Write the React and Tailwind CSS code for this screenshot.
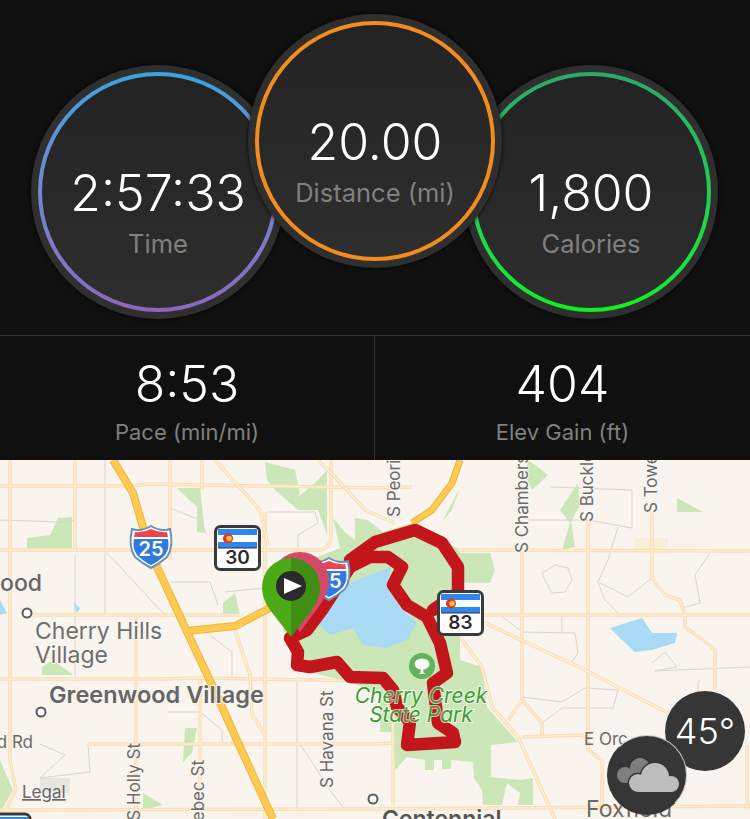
import React from 'react';

// page background of the top half is nearly black, map sits below it
const MAJOR_ROADS = [
  'M0,26 L130,26 L150,24 L375,28 L412,27',
  'M0,90 L320,90 Q331,88 331,75 L331,0',
  'M27,155 L240,155',
  'M0,219 L160,219 L200,218 L375,221 L393,222',
  'M88,284 L375,284 L393,283',
  'M0,350 L375,349 L750,346',
  'M10,0 L10,150 L10,300 L16,330 L6,350',
  'M75,0 L75,90',
  'M170,0 L170,100',
  'M202,0 L202,30',
  'M136,155 L136,359',
  'M200,220 L200,359',
  'M265,52 L265,359',
  'M393,222 L393,345',
  'M458,90 L750,91',
  'M483,155 L750,155',
  'M522,90 L522,240 L542,263 L542,277',
  'M522,240 L508,260',
  'M588,62 L588,290 L602,300 L602,347',
  'M652,50 L652,118 L665,135 L680,140 L685,155 L685,167 L700,178 L715,190 L715,230',
  'M522,277 L582,275 L588,280',
  'M747,285 L747,350',
];
const DIAGONAL_ROADS = [
  'M215,0 L260,50 L268,85',
  'M318,0 L335,17 L365,50 L395,63',
  'M485,163 L585,210 L668,253',
  'M460,177 L482,207 L492,247 L518,277 L555,359',
  'M235,170 L250,215 L252,255 L265,275',
];
const MINOR_ROADS = [
  'M105,0 L105,155',
  'M170,48 L200,60 L207,75',
  'M107,93 L165,155',
  'M75,95 L75,217',
  'M0,60 L60,62 L75,60',
  'M170,122 L210,122 L218,145',
  'M225,132 L265,128',
  'M267,52 L315,52 L318,63 L298,75 L298,87',
  'M210,175 L232,192 L232,218',
  'M136,220 L136,284',
  'M168,252 L200,252 L222,270 L222,284',
  'M297,219 L297,350',
  'M40,284 L65,295 L40,318 L90,312 L88,284',
  'M300,284 L330,330 L345,350',
  'M542,113 L555,105 L568,108 L572,120 L565,132 L552,133 L545,120 Z',
  'M550,27 L632,30 L632,68 L588,60 L528,60',
  'M618,67 L608,100 L598,122 L605,140 L620,155',
  'M652,118 L628,137 L600,123',
  'M710,93 L695,115 L700,143 L682,148',
  'M652,203 L665,192 L677,207 L655,211 L750,207',
  'M503,157 L522,172 L575,173 L578,193 L572,202',
  'M562,157 L562,173',
  'M522,237 L562,242 L585,228 L618,230 L613,248 L562,248 L542,263',
  'M700,220 L698,222 L698,240',
];
const PARKS = [
  '177,28 200,28 205,73 197,72 197,47',
  '27,78 50,75 58,58 72,57 72,88 27,88',
  '223,143 235,133 240,155 223,155',
  '42,207 53,200 73,215 42,215',
  '185,268 197,268 192,293 183,302',
  '143,333 163,345 143,350',
  '0,300 13,330 0,353',
  '265,2 295,10 300,33 298,37 315,23 327,10 327,75 318,50 298,50 290,43 275,30 267,20',
  '333,58 345,72 355,80 355,58 368,60 383,72 412,63 460,90 460,200 482,207 487,247 518,282 491,285 491,317 520,320 533,318 533,345 518,345 520,333 507,323 502,345 483,345 482,330 474,318 473,302 451,300 451,309 442,309 442,300 434,300 434,310 425,310 425,300 407,297 395,310 393,272 380,272 380,235 350,222 313,213 283,170 310,100 340,88',
  '458,93 490,93 495,110 490,123 460,123',
  '528,0 548,15 532,30 525,15',
  '460,28 442,62 452,50',
  '578,23 560,50 570,63 562,90 575,87 571,62 580,45',
  '677,38 703,52 677,52',
];
const LAKES = [
  '317,163 350,123 390,107 390,130 400,147 417,163 407,180 387,188 363,185 353,168 330,175',
  '610,168 642,158 652,173 677,173 675,183 652,190 635,192 622,180',
  '0,140 7,153 0,155',
  '74,143 80,148 77,153',
];

function StatCircle({ value, label, ringClass, className }) {
  return (
    <div className={`size-[254px] shrink-0 rounded-full bg-[#2f2f2f] p-[7px] shadow-[0_0_4px_rgba(0,0,0,0.8)] ${className}`}>
      <div className={`size-full rounded-full p-[4px] ${ringClass}`}>
        <div className="flex size-full flex-col items-center justify-center rounded-full bg-gradient-to-b from-[#232323] to-[#2e2e2e] pt-[40px]">
          <div className="text-[50px] leading-[58px] font-light whitespace-nowrap text-white">{value}</div>
          <div className="mt-[6px] text-[25.5px] leading-[32px] whitespace-nowrap text-[#808080]">{label}</div>
        </div>
      </div>
    </div>
  );
}

function BottomStat({ value, label, className }) {
  return (
    <div className={`flex flex-col items-center pt-[19px] ${className}`}>
      <div className="text-[50px] leading-[58px] font-light text-white">{value}</div>
      <div className="mt-[5px] text-[22px] leading-[28px] text-[#808080]">{label}</div>
    </div>
  );
}

function InterstateShield({ x, y, number }) {
  return (
    <g transform={`translate(${x} ${y})`}>
      <path d="M3,4 Q12,7 22,1 Q32,7 41,4 Q45,22 38,32 Q30,39 22,43 Q14,39 6,32 Q-1,22 3,4 Z" fill="#ffffff" stroke="#6f8db5" strokeWidth="2" />
      <path d="M5,14 Q3,23 8,30 Q15,37 22,40 Q29,37 36,30 Q41,23 39,14 Z" fill="#2b7be0" />
      <path d="M6,7 Q14,8 22,4 Q30,8 38,7 L39,12 L5,12 Z" fill="#ea4450" />
      <text x="22" y="31" textAnchor="middle" className="fill-white text-[20px] font-semibold">{number}</text>
    </g>
  );
}

function StateShield({ x, y, number }) {
  return (
    <g transform={`translate(${x} ${y})`}>
      <rect x="1.5" y="1.5" width="44" height="43" rx="5" fill="#ffffff" stroke="#3a3a3a" strokeWidth="3" />
      <rect x="4" y="4" width="39" height="19" fill="#2f86ee" />
      <rect x="4" y="10" width="39" height="7" fill="#ffffff" />
      <line x1="4" y1="23" x2="43" y2="23" stroke="#333333" strokeWidth="1" />
      <circle cx="14" cy="13.5" r="5" fill="#e0352b" />
      <circle cx="15" cy="13.5" r="2.8" fill="#fbbf24" />
      <text x="23.5" y="39" textAnchor="middle" className="fill-[#2b2b2b] text-[19px] font-semibold">{number}</text>
    </g>
  );
}

function CityDot({ x, y }) {
  return <circle cx={x} cy={y} r="4.5" fill="#ffffff" stroke="#5b5b5b" strokeWidth="2" />;
}

function RoadLabel({ x, y, anchor = 'start', children }) {
  return (
    <text
      transform={`translate(${x} ${y}) rotate(-90)`}
      textAnchor={anchor}
      className="fill-[#6a6a6a] stroke-[#f9f5ee] stroke-[2px] text-[17px] [paint-order:stroke]"
    >
      {children}
    </text>
  );
}

function MapDrawing() {
  return (
    <svg viewBox="0 0 750 359" className="block h-[359px] w-[750px]">
      <rect width="750" height="359" fill="#f9f5ee" />
      <rect x="40" y="318" width="30" height="15" fill="#e9e6e0" />
      <rect x="635" y="78" width="33" height="11" fill="#fbeed8" />
      {PARKS.map((pts) => <polygon key={pts} points={pts} fill="#cbe7b8" />)}
      {LAKES.map((pts) => <polygon key={pts} points={pts} fill="#a9daf3" />)}
      {MINOR_ROADS.map((d) => <path key={d} d={d} fill="none" stroke="#d9d5cc" strokeWidth="1" />)}
      {MAJOR_ROADS.map((d) => <path key={d} d={d} fill="none" stroke="#f9deb3" strokeWidth="3.5" />)}
      {MAJOR_ROADS.map((d) => <path key={d} d={d} fill="none" stroke="#fcecd2" strokeWidth="1.5" />)}
      {DIAGONAL_ROADS.map((d) => <path key={d} d={d} fill="none" stroke="#f9dcae" strokeWidth="3.5" />)}
      {DIAGONAL_ROADS.map((d) => <path key={d} d={d} fill="none" stroke="#fcf0dc" strokeWidth="1.5" />)}

      {/* I-25 and its branch */}
      <g fill="none" strokeLinejoin="round">
        <path d="M113,0 L133,33 L143,67 L157,107 L183,163 L197,193 L213,227 L240,287 L273,359" stroke="#f2b33d" strokeWidth="8" />
        <path d="M187,171 L235,166 L270,148 L290,135" stroke="#f2b33d" strokeWidth="8" />
        <path d="M460,0 L452,23 L432,50 L412,63" stroke="#f2b33d" strokeWidth="7" />
        <path d="M113,0 L133,33 L143,67 L157,107 L183,163 L197,193 L213,227 L240,287 L273,359" stroke="#fdcb52" strokeWidth="6" />
        <path d="M187,171 L235,166 L270,148 L290,135" stroke="#fdcb52" strokeWidth="6" />
        <path d="M460,0 L452,23 L432,50 L412,63" stroke="#fdcb52" strokeWidth="5" />
      </g>

      {/* route */}
      <g fill="none" stroke="#c3161c" strokeWidth="12.5" strokeLinejoin="round" strokeLinecap="round">
        <path d="M290,178 L298,192 L297,205 L310,207 L337,202 L350,217 L383,218 L393,230 L397,247 L410,262 L407,285 L455,282 L453,273 L438,263 L433,223 L447,213 L440,183 L427,157 L407,145 L393,125 L402,107 L388,97 L370,97 L350,107 L322,150 L307,170 L290,178" />
        <path d="M350,100 L375,82 L415,70 L442,83 L458,107 L458,133 L433,150" />
      </g>

      <InterstateShield x={129} y={65} number="25" />
      <InterstateShield x={307} y={97} number="25" />
      <StateShield x={214} y={65} number="30" />
      <StateShield x={437} y={130} number="83" />
      <rect x="-12" y="354" width="42" height="20" rx="5" fill="#ffffff" stroke="#3a3a3a" strokeWidth="3" />
      <rect x="-12" y="357" width="40" height="4" fill="#2f86ee" />

      {/* park marker */}
      <circle cx="422" cy="206" r="13" fill="#62b35c" />
      <ellipse cx="422" cy="204" rx="7.5" ry="5.5" fill="#ffffff" />
      <path d="M421,206 L423,206 L423.5,213 L426,214 L418,214 L420.5,213 Z" fill="#ffffff" />

      {/* map labels */}
      <text x="42" y="131" textAnchor="end" className="fill-[#666666] stroke-[#f9f5ee] stroke-[2px] text-[23px] font-medium [paint-order:stroke]">ood</text>
      <text x="35" y="179" className="fill-[#6f6f6f] stroke-[#f9f5ee] stroke-[2px] text-[23px] [paint-order:stroke]">Cherry Hills</text>
      <text x="35" y="203" className="fill-[#6f6f6f] stroke-[#f9f5ee] stroke-[2px] text-[23px] [paint-order:stroke]">Village</text>
      <text x="49" y="243" className="fill-[#666666] stroke-[#f9f5ee] stroke-[2px] text-[23.5px] font-semibold [paint-order:stroke]">Greenwood Village</text>
      <text x="33" y="288" textAnchor="end" className="fill-[#6a6a6a] stroke-[#f9f5ee] stroke-[2px] text-[17px] [paint-order:stroke]">d Rd</text>
      <text x="22" y="338" className="fill-[#666666] text-[17px] underline">Legal</text>
      <RoadLabel x={140} y={283} anchor="end">S Holly St</RoadLabel>
      <RoadLabel x={204} y={300} anchor="end">S Quebec St</RoadLabel>
      <RoadLabel x={333} y={328}>S Havana St</RoadLabel>
      <RoadLabel x={400} y={57}>S Peoria St</RoadLabel>
      <RoadLabel x={528} y={93}>S Chambers Rd</RoadLabel>
      <RoadLabel x={593} y={62}>S Buckley Rd</RoadLabel>
      <RoadLabel x={657} y={53}>S Tower Rd</RoadLabel>
      <text x="584" y="285" className="fill-[#6a6a6a] text-[17px]">E Orc</text>
      <text x="586" y="357" className="fill-[#6a6a6a] text-[23px]">Foxfield</text>
      <text x="382" y="367" className="fill-[#555555] text-[23px] font-semibold">Centennial</text>
      <CityDot x={27} y={153} />
      <CityDot x={41} y={252} />
      <CityDot x={373} y={339} />

      <text x="421" y="243" textAnchor="middle" className="fill-[#3f9c35] stroke-white/70 stroke-[2px] text-[21px] italic [paint-order:stroke]">Cherry Creek</text>
      <text x="421" y="262" textAnchor="middle" className="fill-[#3f9c35] stroke-white/70 stroke-[2px] text-[21px] italic [paint-order:stroke]">State Park</text>

      {/* finish and start pins */}
      <path d="M300,172 L280,145 Q271,132 271,121 A29,29 0 0 1 329,121 Q329,132 320,145 Z" fill="#d24a68" />
      <path d="M291,177 L270,150 Q262,139 262,127 A29,29 0 0 1 291,98 Z" fill="#4daa17" />
      <path d="M291,177 L312,150 Q320,139 320,127 A29,29 0 0 0 291,98 Z" fill="#3f8f14" />
      <circle cx="291" cy="126" r="15" fill="#2a2a2a" />
      <path d="M284,118 L302,126 L284,134 Z" fill="#ffffff" />
    </svg>
  );
}

function WeatherBadges() {
  return (
    <>
      <div className="absolute top-[231px] left-[665px] flex size-[80px] items-center justify-center rounded-full bg-[#363636] text-[36px] font-light text-white">
        45°
      </div>
      <div className="absolute top-[275px] left-[607px] flex size-[80px] items-center justify-center rounded-full border border-[#363636] border-t-white/70 border-r-white/70 bg-[#363636]">
        <svg viewBox="0 0 64 40" className="h-[40px] w-[64px]">
          <g fill="#7e7e7e">
            <circle cx="10" cy="20" r="8" />
            <circle cx="25" cy="13" r="10" />
            <rect x="10" y="16" width="25" height="12" />
          </g>
          <g fill="#363636">
            <circle cx="23" cy="28" r="10.5" />
            <circle cx="40" cy="22" r="15.5" />
            <circle cx="57" cy="29" r="9.5" />
          </g>
          <g fill="#bdbdbd">
            <circle cx="23" cy="28" r="9" />
            <circle cx="40" cy="22" r="14" />
            <circle cx="56" cy="29" r="8" />
            <rect x="23" y="26" width="33" height="11" />
          </g>
        </svg>
      </div>
    </>
  );
}

export default function App() {
  return (
    <div className="h-[819px] w-[750px] overflow-hidden bg-[#101010] font-['Inter',sans-serif]">
      {/* Activity summary circles */}
      <div className="flex h-[336px] items-start border-b border-[#333333] pl-[31px]">
        <StatCircle className="mt-[65px]" value="2:57:33" label="Time" ringClass="bg-gradient-to-b from-[#36a3e0] to-[#8a68bd]" />
        <StatCircle className="relative z-10 mt-[14px] -ml-[37px]" value="20.00" label="Distance (mi)" ringClass="bg-[#f28c1e]" />
        <StatCircle className="mt-[65px] -ml-[38px]" value="1,800" label="Calories" ringClass="bg-gradient-to-b from-[#2aa86a] to-[#12f01a]" />
      </div>

      <div className="flex h-[124px]">
        <BottomStat className="w-[374px]" value="8:53" label="Pace (min/mi)" />
        <BottomStat className="flex-1 border-l border-[#333333]" value="404" label="Elev Gain (ft)" />
      </div>

      <div className="relative h-[359px] overflow-hidden">
        <MapDrawing />
        <WeatherBadges />
      </div>
    </div>
  );
}
